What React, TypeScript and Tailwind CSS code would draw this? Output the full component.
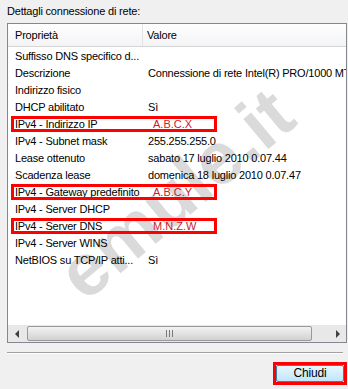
const rows: { name: string; value: string; mark?: boolean }[] = [
  { name: "Suffisso DNS specifico d...", value: "" },
  { name: "Descrizione", value: "Connessione di rete Intel(R) PRO/1000 MT" },
  { name: "Indirizzo fisico", value: "" },
  { name: "DHCP abilitato", value: "Sì" },
  { name: "IPv4 - Indirizzo IP", value: "A.B.C.X", mark: true },
  { name: "IPv4 - Subnet mask", value: "255.255.255.0" },
  { name: "Lease ottenuto", value: "sabato 17 luglio 2010 0.07.44" },
  { name: "Scadenza lease", value: "domenica 18 luglio 2010 0.07.47" },
  { name: "IPv4 - Gateway predefinito", value: "A.B.C.Y", mark: true },
  { name: "IPv4 - Server DHCP", value: "" },
  { name: "IPv4 - Server DNS", value: "M.N.Z.W", mark: true },
  { name: "IPv4 - Server WINS", value: "" },
  { name: "NetBIOS su TCP/IP atti...", value: "Sì" },
]

const App = () => {
  return (
    <div className="w-[348px] h-[389px] bg-[#f0f0f0] overflow-hidden flex flex-col text-[11px] tracking-[-0.2px] text-black font-['Liberation_Sans',Arial,sans-serif]">
      <div className="h-[23px] pl-[7px] pt-[4px] leading-[15px]">Dettagli connessione di rete:</div>

      <div className="ml-[7px] w-[340px] h-[320px] border border-[#828790] bg-white relative overflow-hidden flex flex-col">
        {/* watermark */}
        <div className="absolute left-[168px] top-[170px] w-0 h-0 pointer-events-none">
          <span className="absolute -translate-x-1/2 -translate-y-1/2 -rotate-[40deg] whitespace-nowrap text-[74px] font-bold leading-none tracking-normal text-[#dadada]">
            emule.it
          </span>
        </div>

        <div className="relative flex h-[23px] shrink-0 border-b border-[#d5d5d5] bg-gradient-to-b from-white to-[#f3f4f6]">
          <div className="w-[135px] flex items-center pl-[7px] border-r border-[#e3e3e3]">Proprietà</div>
          <div className="flex-1 flex items-center pl-[4px]">Valore</div>
        </div>

        <div className="relative flex-1 pt-[1px]">
          {rows.map((r) => (
            <div key={r.name} className="relative flex h-[17px] items-center whitespace-nowrap">
              {r.mark && (
                <span className="absolute left-[3px] top-0 w-[206px] h-[16px] border-[3px] border-[#ff0000]" />
              )}
              <div className="w-[140px] pl-[7px] shrink-0">{r.name}</div>
              <div className={r.mark ? "pl-[5px] text-[#c8202c] tracking-normal" : ""}>{r.value}</div>
            </div>
          ))}
        </div>

        {/* horizontal scrollbar */}
        <div className="relative flex h-[17px] shrink-0 bg-[#e8e8e8] items-center">
          <div className="w-[17px] h-full flex items-center justify-center">
            <span className="w-0 h-0 border-y-[4px] border-y-transparent border-r-[4px] border-r-[#404040]" />
          </div>
          <div className="flex-1 h-[15px] mx-[2px] rounded-[2px] border border-[#9a9a9a] bg-gradient-to-b from-[#f2f2f2] to-[#d2d2d2] flex items-center justify-center">
            <div className="flex gap-[2px]">
              <span className="w-[1px] h-[7px] bg-[#7a7a7a]" />
              <span className="w-[1px] h-[7px] bg-[#7a7a7a]" />
              <span className="w-[1px] h-[7px] bg-[#7a7a7a]" />
            </div>
          </div>
          <div className="w-[15px]" />
          <div className="w-[17px] h-full flex items-center justify-center">
            <span className="w-0 h-0 border-y-[4px] border-y-transparent border-l-[4px] border-l-[#404040]" />
          </div>
        </div>
      </div>

      <div className="mt-[9px] ml-[7px] w-[336px] h-[2px] border-t border-[#a0a0a0] border-b border-b-white" />

      <div className="flex justify-end pr-[1px] mt-[8px]">
        <div className="border-[3px] border-[#ff0000]">
          <button className="w-[68px] h-[17px] border border-[#3c7fb1] rounded-[2px] bg-gradient-to-b from-[#eaf6fd] to-[#bee6fd] text-[12px] leading-[15px] text-black">
            Chiudi
          </button>
        </div>
      </div>
    </div>
  )
}

export default App
